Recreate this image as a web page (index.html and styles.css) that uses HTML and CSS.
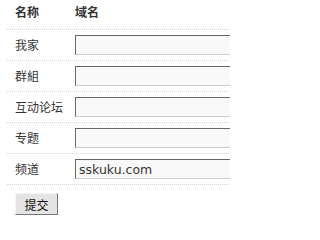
FILE: index.html
```html
<!DOCTYPE html>
<html>
<head>
<meta charset="utf-8">
<link rel="stylesheet" href="styles.css">
</head>
<body>
<div class="page">
<div class="form">
  <div class="row head">
    <div class="label">名称</div>
    <div class="label">域名</div>
  </div>
  <div class="row"><div class="label">我家</div><input class="field" type="text" value=""></div>
  <div class="row"><div class="label">群組</div><input class="field" type="text" value=""></div>
  <div class="row"><div class="label">互动论坛</div><input class="field" type="text" value=""></div>
  <div class="row"><div class="label">专题</div><input class="field" type="text" value=""></div>
  <div class="row"><div class="label">频道</div><input class="field" type="text" value="sskuku.com"></div>
  <div class="actions"><button class="submit" type="button">提交</button></div>
</div>
</div>
</body>
</html>
```
FILE: styles.css
```css
html, body {
  margin: 0;
  padding: 0;
  background: #ffffff;
}
body {
  font-family: "Noto Sans CJK SC", "DejaVu Sans", sans-serif;
  font-size: 12px;
  color: #333333;
}
.page {
  width: 230px;
  height: 231px;
  overflow: hidden;
}
.form {
  margin-left: 7px;
  width: 300px;
}
.row {
  display: grid;
  grid-template-columns: 60px 1fr;
  align-items: center;
  height: 30px;
  padding-left: 8px;
  border-bottom: 1px dotted #cdd6da;
}
.row.head {
  height: 29px;
  font-weight: bold;
  align-items: start;
}
.row.head .label {
  line-height: 24px;
}
.label {
  line-height: 14px;
}
.field {
  box-sizing: border-box;
  height: 20px;
  width: 230px;
  margin: 0;
  padding: 0 3px;
  border: 1px solid #cccccc;
  border-top-color: #666666;
  border-left-color: #666666;
  background: #f9f9f9;
  font-family: "DejaVu Sans", sans-serif;
  font-size: 12.5px;
  color: #333333;
  outline: none;
}
.actions {
  padding: 8px 0 0 8px;
}
.submit {
  box-sizing: border-box;
  width: 43px;
  height: 22px;
  margin: 0;
  padding: 0;
  background: #e4e4e4;
  border: 1px solid #777777;
  border-top-color: #f4f4f4;
  border-left-color: #f4f4f4;
  font-family: "Noto Sans CJK SC", sans-serif;
  font-size: 12px;
  color: #111111;
}
```
